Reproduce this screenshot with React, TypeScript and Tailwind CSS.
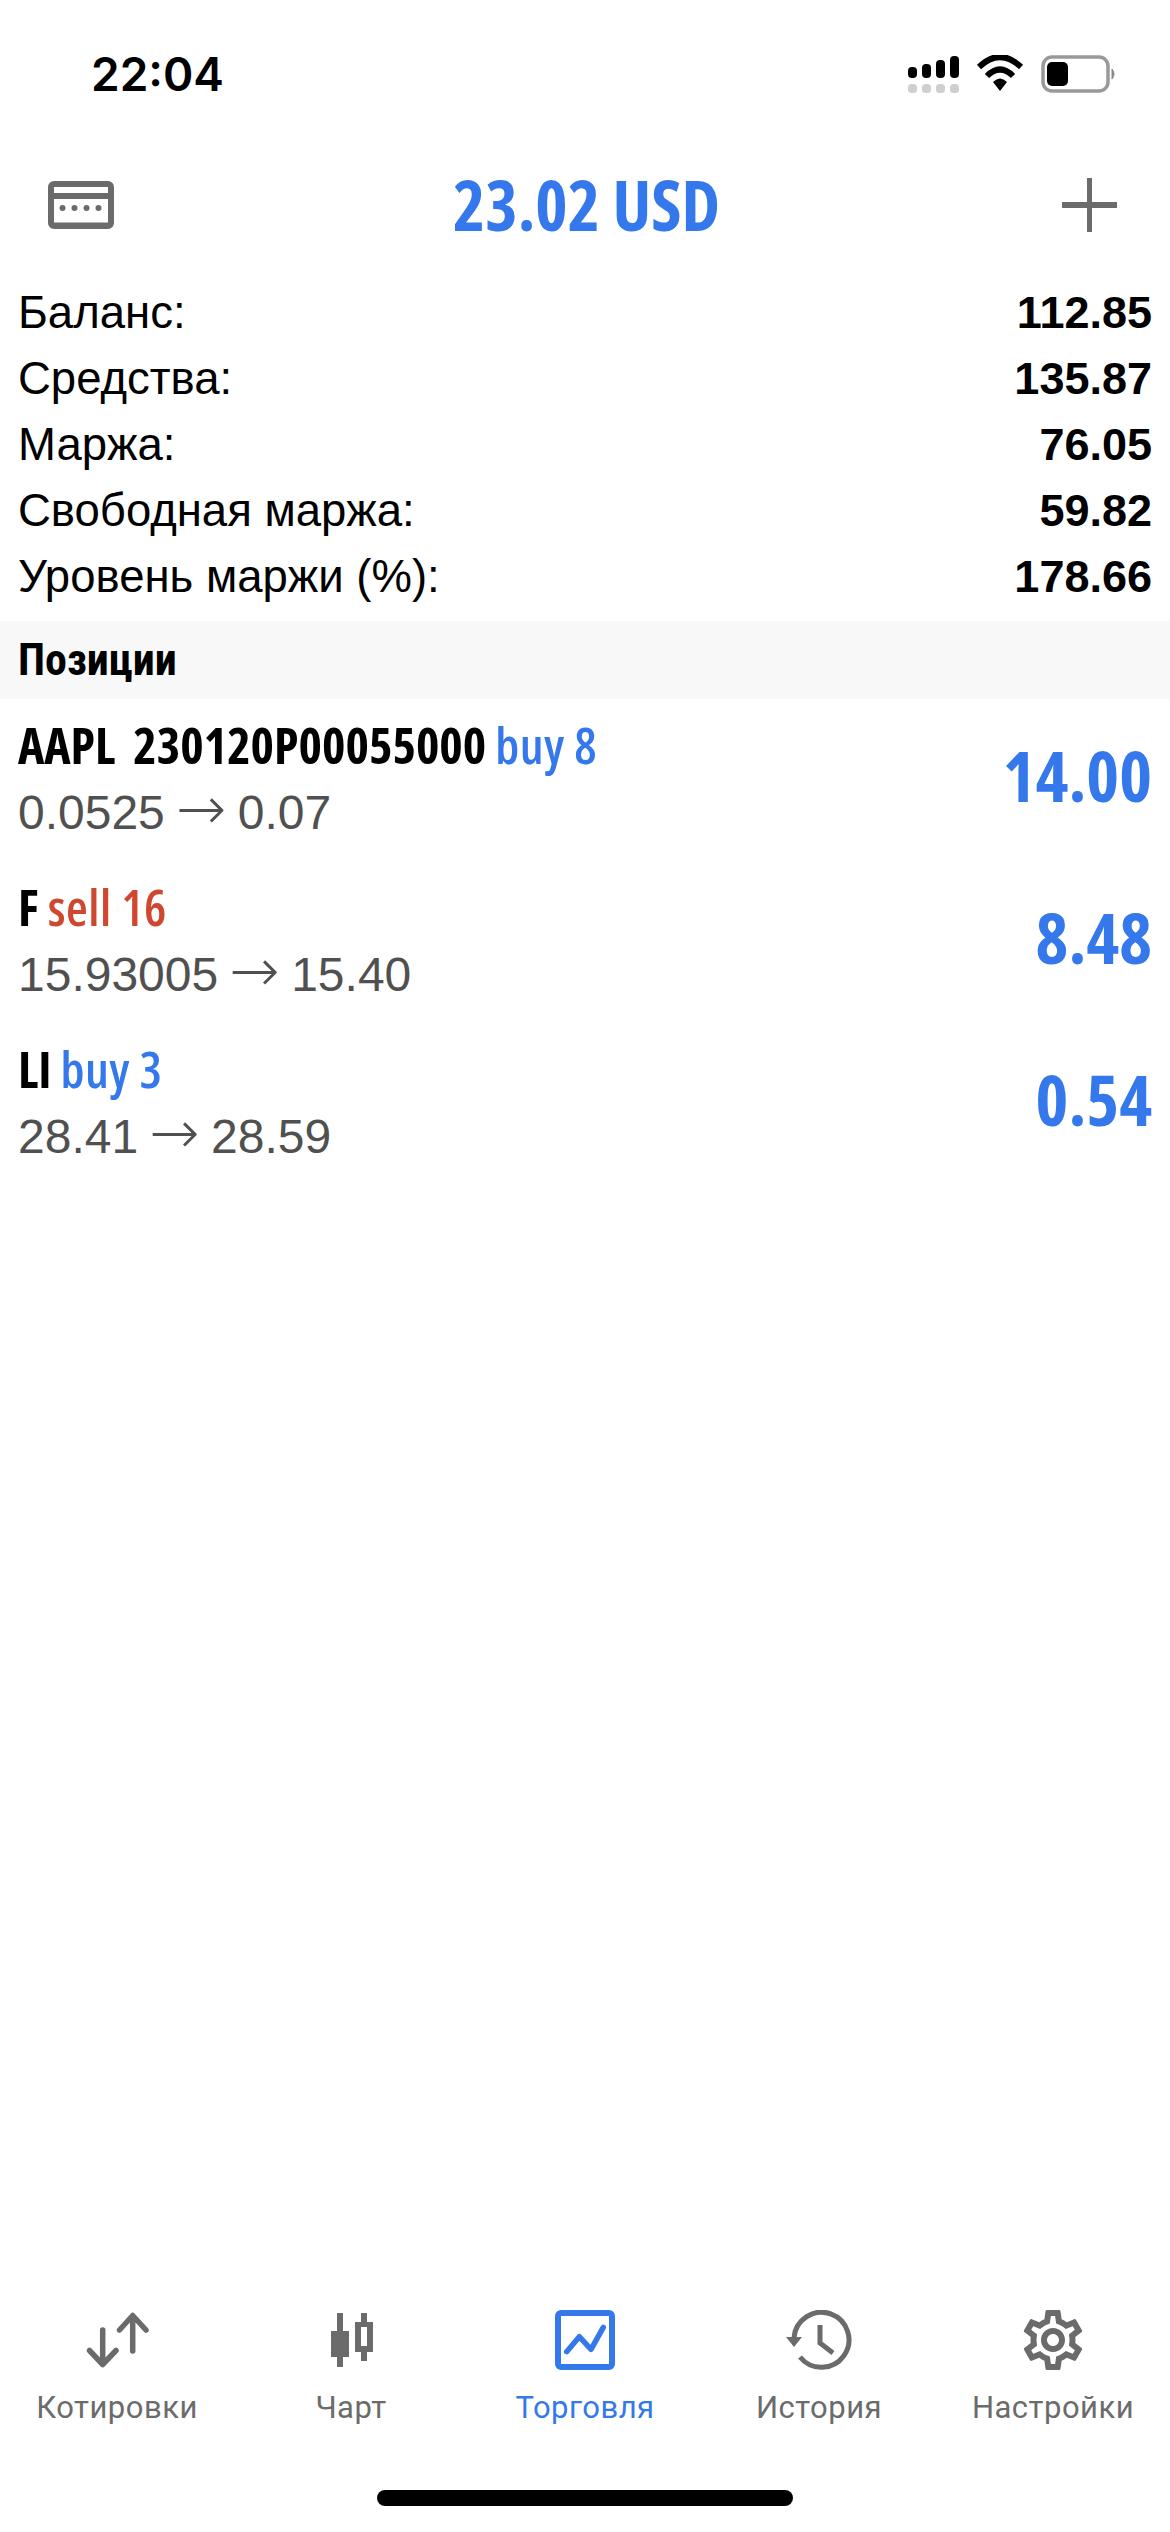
import type { ReactNode } from "react";

const positions = [
  { symbol: "AAPL  230120P00055000", side: "buy 8", sell: false, from: "0.0525", to: "0.07", profit: "14.00" },
  { symbol: "F", side: "sell 16", sell: true, from: "15.93005", to: "15.40", profit: "8.48" },
  { symbol: "LI", side: "buy 3", sell: false, from: "28.41", to: "28.59", profit: "0.54" },
];

const summary = [
  ["Баланс:", "112.85"],
  ["Средства:", "135.87"],
  ["Маржа:", "76.05"],
  ["Свободная маржа:", "59.82"],
  ["Уровень маржи (%):", "178.66"],
];

function StatusIcons() {
  return (
    <svg width="240" height="40" viewBox="880 55 240 40">
      {/* signal */}
      <rect x="907" y="67" width="9" height="11" rx="4" fill="#000" />
      <rect x="921" y="64" width="9" height="14" rx="4" fill="#000" />
      <rect x="935" y="60" width="9" height="18" rx="4" fill="#000" />
      <rect x="949" y="56" width="9" height="22" rx="4" fill="#000" />
      <rect x="907" y="84" width="9" height="9" rx="3.5" fill="#cfcfcf" />
      <rect x="921" y="84" width="9" height="9" rx="3.5" fill="#cfcfcf" />
      <rect x="935" y="84" width="9" height="9" rx="3.5" fill="#cfcfcf" />
      <rect x="949" y="84" width="9" height="9" rx="3.5" fill="#cfcfcf" />
      {/* wifi */}
      <path d="M978 67 Q999 47 1020 67" fill="none" stroke="#000" strokeWidth="6" />
      <path d="M986 76 Q999 63 1012 76" fill="none" stroke="#000" strokeWidth="6" />
      <path d="M992 82 Q999 75 1006 82 L999 91 Z" fill="#000" />
      {/* battery */}
      <rect x="1042" y="57" width="65" height="34" rx="9" fill="none" stroke="#999" strokeWidth="3.5" />
      <rect x="1046" y="62" width="21" height="24" rx="5" fill="#000" />
      <path d="M1111 69 Q1115 74 1111 79 Z" fill="#888" stroke="#888" strokeWidth="1" />
    </svg>
  );
}

function TabIcon({ name }: { name: string }) {
  if (name === "quotes") {
    return (
      <svg width="66" height="60" viewBox="0 0 66 60" fill="none" stroke="#6b6b6b" strokeWidth="5.5" strokeLinecap="round" strokeLinejoin="round">
        <path d="M18.7 20V54M5.5 40.5L18.7 54.5L32 40.5" />
        <path d="M48.7 41V6M35.5 20L48.7 5.5L62 20" />
      </svg>
    );
  }
  if (name === "chart") {
    return (
      <svg width="44" height="60" viewBox="0 0 44 60" fill="#6b6b6b">
        <rect x="8" y="3" width="6" height="54" />
        <rect x="2" y="21" width="18" height="26" />
        <rect x="32" y="3" width="6" height="9" />
        <rect x="32" y="42" width="6" height="9" />
        <path fillRule="evenodd" d="M26 12H44V42H26ZM32 17V36H38V17Z" />
      </svg>
    );
  }
  if (name === "trade") {
    return (
      <svg width="60" height="60" viewBox="0 0 60 60" fill="none" stroke="#3478eb" strokeWidth="6">
        <rect x="3" y="3" width="54" height="54" rx="3" />
        <path d="M11.7 41.7L24.3 26.7L36 39.3L48.3 17.3" strokeWidth="5.5" strokeLinecap="round" strokeLinejoin="round" />
      </svg>
    );
  }
  if (name === "history") {
    return (
      <svg width="66" height="60" viewBox="0 0 66 60" fill="none" stroke="#6b6b6b" strokeWidth="5">
        <path d="M14 47A27.5 27.5 0 1 0 8 28" />
        <path d="M0 27H16L8 37Z" fill="#6b6b6b" stroke="none" />
        <path d="M34 15V33L47 43" />
      </svg>
    );
  }
  return (
    <svg width="60" height="60" viewBox="2 2 20 20" fill="#6b6b6b">
      <path d="M19.43 12.98c.04-.32.07-.64.07-.98 0-.34-.03-.66-.07-.98l2.11-1.65c.19-.15.24-.42.12-.64l-2-3.46c-.09-.16-.26-.25-.44-.25-.06 0-.12.01-.17.03l-2.49 1c-.52-.4-1.08-.73-1.69-.98l-.38-2.65C14.46 2.18 14.25 2 14 2h-4c-.25 0-.46.18-.49.42l-.38 2.65c-.61.25-1.17.59-1.69.98l-2.49-1c-.06-.02-.12-.03-.18-.03-.17 0-.34.09-.43.25l-2 3.46c-.13.22-.07.49.12.64l2.11 1.65c-.04.32-.07.65-.07.98 0 .33.03.66.07.98l-2.11 1.65c-.19.15-.24.42-.12.64l2 3.46c.09.16.26.25.44.25.06 0 .12-.01.17-.03l2.49-1c.52.4 1.08.73 1.69.98l.38 2.65c.03.24.24.42.49.42h4c.25 0 .46-.18.49-.42l.38-2.65c.61-.25 1.17-.59 1.69-.98l2.49 1c.06.02.12.03.18.03.17 0 .34-.09.43-.25l2-3.46c.12-.22.07-.49-.12-.64l-2.11-1.65zm-1.98-1.71c.04.31.05.52.05.73 0 .21-.02.43-.05.73l-.14 1.13.89.7 1.08.84-.7 1.21-1.27-.51-1.04-.42-.9.68c-.43.32-.84.56-1.25.73l-1.06.43-.16 1.13-.2 1.35h-1.4l-.19-1.35-.16-1.13-1.06-.43c-.43-.18-.83-.41-1.23-.71l-.91-.7-1.06.43-1.27.51-.7-1.21 1.08-.84.89-.7-.14-1.13c-.03-.31-.05-.54-.05-.74s.02-.43.05-.73l.14-1.13-.89-.7-1.08-.84.7-1.21 1.27.51 1.04.42.9-.68c.43-.32.84-.56 1.25-.73l1.06-.43.16-1.13.2-1.35h1.39l.19 1.35.16 1.13 1.06.43c.43.18.83.41 1.23.71l.91.7 1.06-.43 1.27-.51.7 1.21-1.07.85-.89.7.14 1.13zM12 8c-2.21 0-4 1.79-4 4s1.79 4 4 4 4-1.79 4-4-1.79-4-4-4zm0 6c-1.1 0-2-.9-2-2s.9-2 2-2 2 .9 2 2-.9 2-2 2z" />
    </svg>
  );
}

function Tab({ name, active, children }: { name: string; active?: boolean; children: ReactNode }) {
  return (
    <div className="flex flex-col items-center">
      <div className="h-[60px] flex items-center">
        <TabIcon name={name} />
      </div>
      <div
        className={
          "mt-[20px] text-[31px] leading-[36px] tracking-[0.5px] font-['Roboto',sans-serif] " +
          (active ? "text-[#3478eb]" : "text-[#6b6b6b]")
        }
      >
        {children}
      </div>
    </div>
  );
}

export default function App() {
  return (
    <div className="w-[1170px] h-[2532px] bg-white flex flex-col font-['Liberation_Sans',sans-serif] overflow-hidden">
      {/* status bar */}
      <div className="h-[130px] flex justify-between pl-[91px] pr-[49px] pt-[49px]">
        <span className="text-[46px] leading-[50px] font-semibold text-black font-['Inter',sans-serif]">22:04</span>
        <div className="pt-[6px]">
          <StatusIcons />
        </div>
      </div>

      {/* header */}
      <div className="h-[150px] flex items-center justify-between pl-[48px] pr-[53px]">
        <svg width="66" height="48" viewBox="0 0 66 48" fill="#6b6b6b">
          <path fillRule="evenodd" d="M6 0H60A6 6 0 0 1 66 6V42A6 6 0 0 1 60 48H6A6 6 0 0 1 0 42V6A6 6 0 0 1 6 0ZM6 6V12H60V6ZM6 18V41.5H60V18Z" />
          <circle cx="14.5" cy="27" r="3" /><circle cx="26.5" cy="27" r="3" />
          <circle cx="38.5" cy="27" r="3" /><circle cx="50.5" cy="27" r="3" />
        </svg>
        <span className="text-[#3478eb] text-[69px] leading-[70px] font-bold pb-[3px] pr-[3px] font-['Open_Sans',sans-serif] [font-stretch:75%]">
          23.02 USD
        </span>
        <svg width="55" height="54" viewBox="0 0 55 54" fill="#6b6b6b">
          <rect x="25" y="0" width="5" height="54" />
          <rect x="0" y="24" width="55" height="6" />
        </svg>
      </div>

      {/* account summary */}
      <div className="pl-[18px] pr-[18px] mb-[11px]">
        {summary.map(([label, value]) => (
          <div key={label} className="h-[66px] flex items-center justify-between text-[45.5px] text-black">
            <span>{label}</span>
            <span className="font-bold text-[45px]">{value}</span>
          </div>
        ))}
      </div>

      {/* positions */}
      <div className="h-[78px] bg-[#f8f8f8] flex items-center pl-[18px] text-[44px] font-bold text-black font-['Roboto',sans-serif] [font-stretch:75%]">
        Позиции
      </div>
      <div>
        {positions.map((p) => (
          <div key={p.symbol} className="h-[162px] pl-[18px] pr-[18px] flex items-center justify-between">
            <div>
              <div className="text-[50px] leading-[68px] -mt-[3px] font-bold text-black whitespace-pre font-['Open_Sans',sans-serif] [font-stretch:75%]">
                {p.symbol}{" "}
                <span className={"font-semibold tracking-[0.5px] " + (p.sell ? "text-[#d0472f]" : "text-[#3478eb]")}>{p.side}</span>
              </div>
              <div className="text-[48px] leading-[68px] text-[#505050]">
                {p.from} <span className="font-['DejaVu_Sans',sans-serif] text-[60px] leading-[56px] font-extralight -mx-[2px]">→</span> {p.to}
              </div>
            </div>
            <span className="text-[70px] font-bold pb-[10px] text-[#3478eb] font-['Open_Sans',sans-serif] [font-stretch:75%]">{p.profit}</span>
          </div>
        ))}
      </div>

      {/* tab bar */}
      <div className="mt-auto">
        <div className="grid grid-cols-5">
          <Tab name="quotes">Котировки</Tab>
          <Tab name="chart">Чарт</Tab>
          <Tab name="trade" active>Торговля</Tab>
          <Tab name="history">История</Tab>
          <Tab name="settings">Настройки</Tab>
        </div>
        <div className="h-[106px] flex justify-center pt-[64px]">
          <div className="w-[416px] h-[16px] rounded-full bg-black" />
        </div>
      </div>
    </div>
  );
}
